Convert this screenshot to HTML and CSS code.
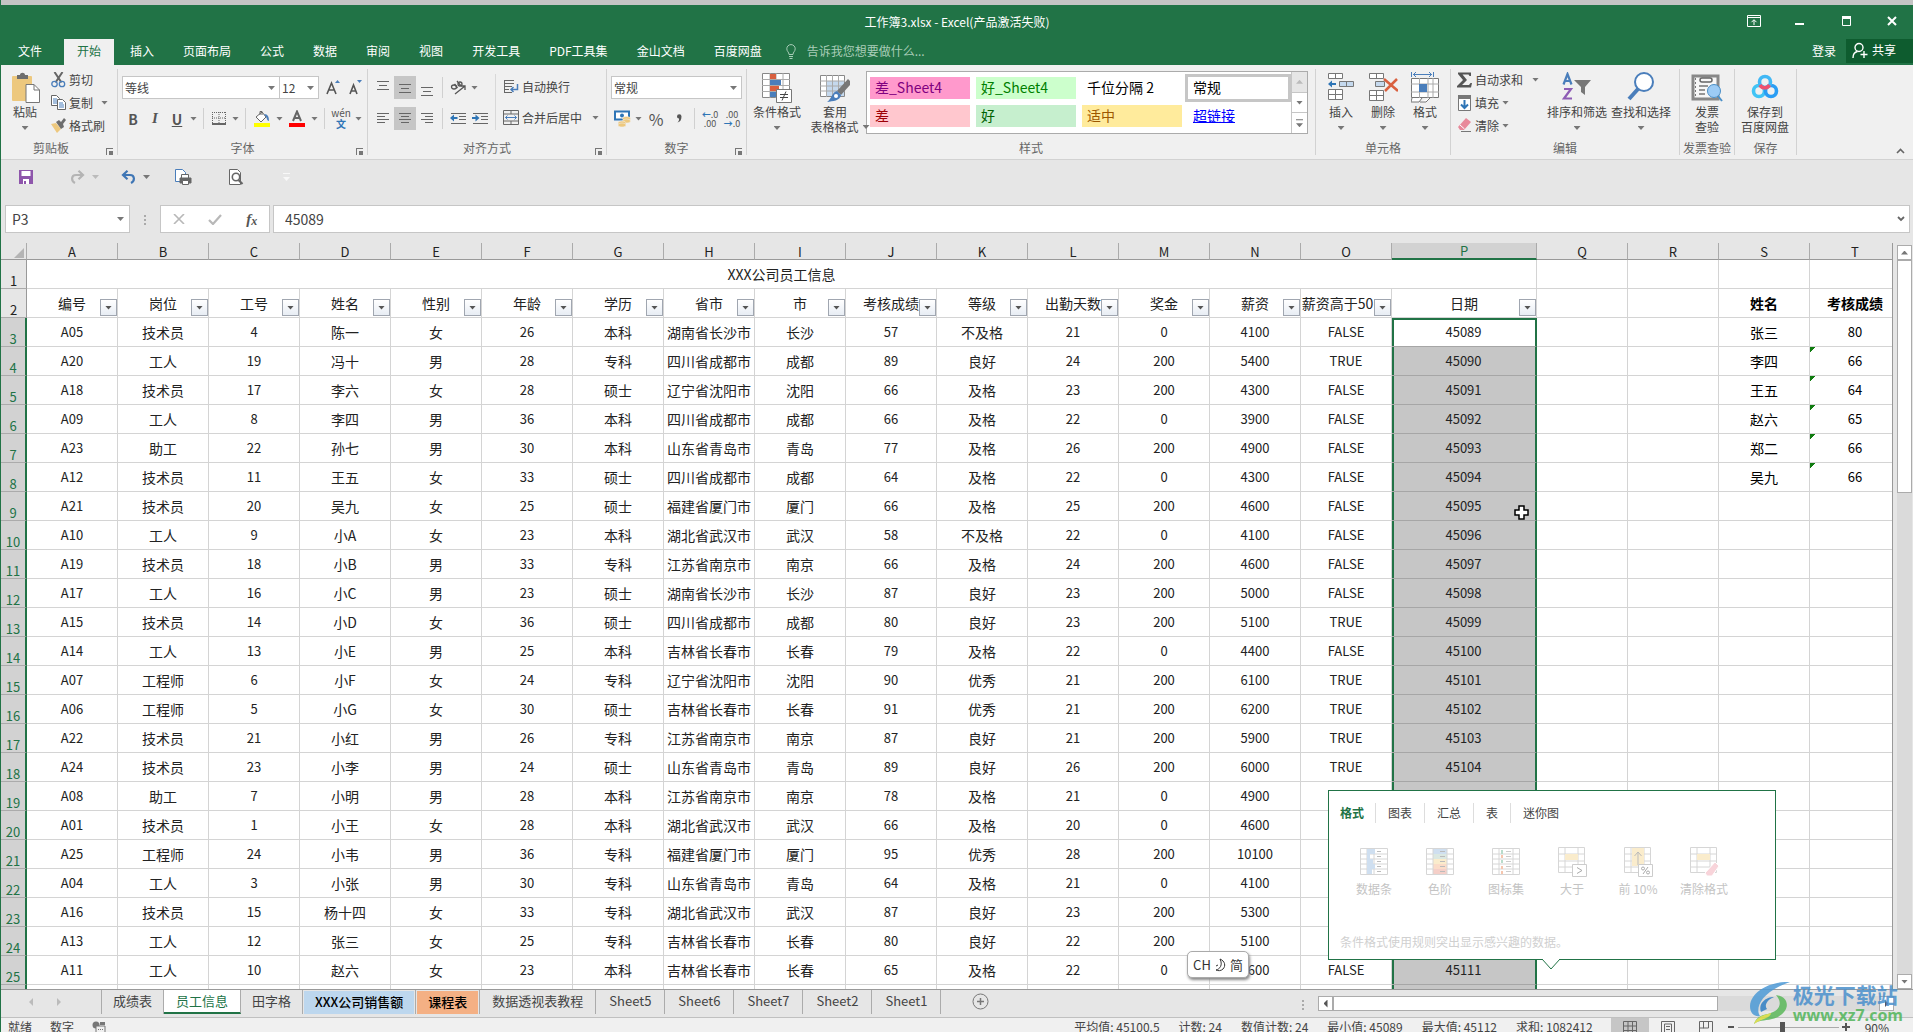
FILE: index.html
```html
<!DOCTYPE html>
<html lang="zh-CN">
<head>
<meta charset="utf-8">
<title>工作簿3.xlsx - Excel</title>
<link rel="stylesheet" href="styles.css">
</head>
<body>
<div class="app">
<header class="titlebar">
  <h1 class="title">工作簿3.xlsx - Excel(产品激活失败)</h1>
  <div class="window-controls">
    <button aria-label="功能区显示选项"><svg width="14" height="12" viewBox="0 0 14 12" fill="none" stroke="#fff"><path d="M.5.5h13v11H.5zM.5 2.5h13M7 10V5M4.500 7.200L7 4.700l2.500 2.500"/></svg></button>
    <button aria-label="最小化"><svg width="14" height="12" viewBox="0 0 14 12"><path d="M2 8h9v2H2z" fill="#fff"/></svg></button>
    <button aria-label="最大化"><svg width="14" height="12" viewBox="0 0 14 12"><path d="M3.500 1.500h8v9h-8z" fill="none" stroke="#fff"/><path d="M3 1h9v3H3z" fill="#fff"/></svg></button>
    <button aria-label="关闭"><svg width="14" height="12" viewBox="0 0 14 12" stroke="#fff" stroke-width="2"><path d="M3 2l8 8M11 2l-8 8"/></svg></button>
  </div>
</header>
<nav class="tabs">
  <button class="tab file">文件</button><button class="tab active">开始</button><button class="tab">插入</button><button class="tab">页面布局</button><button class="tab">公式</button><button class="tab">数据</button><button class="tab">审阅</button><button class="tab">视图</button><button class="tab">开发工具</button><button class="tab">PDF工具集</button><button class="tab">金山文档</button><button class="tab">百度网盘</button>
  <button class="tellme"><svg width="10" height="15" viewBox="0 0 10 15" fill="none" stroke="#a9cdb8"><path d="M3 10.500C3 8 .8 7.500.8 4.800a4.200 4.200 0 018.400 0C9.200 7.500 7 8 7 10.500zM3 12.500h4M3.500 14.500h3"/></svg>告诉我您想要做什么...</button>
  <button class="login">登录</button>
  <button class="share"><svg width="16" height="17" viewBox="0 0 16 17" fill="none" stroke="#fff" stroke-width="1.400"><circle cx="7" cy="5.500" r="4"/><path d="M1 16c0-3.500 2-6 4.500-6.500M12 9v7M8.500 12.500h7"/></svg>共享</button>
</nav>

<section class="ribbon" aria-label="开始">
  <div class="group g-clip">
    <div class="body">
      <button class="big paste"><svg width="30" height="31" viewBox="0 0 30 31"><rect x="0" y="4" width="20" height="25" rx="1" fill="#edc87e"/><path d="M5 7V3h3c0-3 5-3 5 0h3v4z" fill="#6d6d6d"/><path d="M14 12.500h8l5.500 5.500v12.500H14z" fill="#fff" stroke="#777"/><path d="M22 12.500V18h5.500" fill="none" stroke="#777"/></svg><span>粘贴</span><i class="caret"></i></button>
      <div class="stack">
        <button class="small"><svg width="15" height="16" viewBox="0 0 15 16" fill="none"><path d="M3.500 0l7 10.500M11.500 0l-7 10.500" stroke="#666" stroke-width="2"/><circle cx="3.500" cy="12" r="2.700" stroke="#4a7ebb" stroke-width="1.300"/><circle cx="11" cy="12" r="2.700" stroke="#4a7ebb" stroke-width="1.300"/></svg>剪切</button>
        <button class="small"><svg width="15" height="15" viewBox="0 0 15 15" fill="#fff"><path d="M.5.5h5l3 3v7h-8z" stroke="#666"/><path d="M6.500 4.500h5l3 3v7h-8z" stroke="#666"/><path d="M2 4h4M2 6h4M2 8h4M8 8h4M8 10h5M8 12h5" stroke="#4a7ebb"/></svg>复制<i class="caret"></i></button>
        <button class="small"><svg width="15" height="15" viewBox="0 0 15 15"><path d="M0 6l5-1 5 6-4 4z" fill="#edc87e"/><path d="M5 4l3-2 2 2 3-4 2 2-3 4 1 3-3 2z" fill="#6d6d6d"/></svg>格式刷</button>
      </div>
    </div>
    <div class="label">剪贴板<i class="launch"></i></div>
  </div>

  <div class="group g-font">
    <div class="body rows">
      <div class="row">
        <label class="combo font"><select aria-label="字体"><option>等线</option></select></label><label class="combo size"><select aria-label="字号"><option>12</option></select></label>
        <button class="ib" aria-label="增大字号"><svg width="15" height="15" viewBox="0 0 15 15"><path d="M1 14L5.500 3 10 14M2.500 10h6" fill="none" stroke="#555" stroke-width="1.600"/><path d="M9 3l2.500-3L14 3z" fill="#4a7ebb"/></svg></button><button class="ib" aria-label="减小字号"><svg width="15" height="15" viewBox="0 0 15 15"><path d="M2 14l3.500-9L9 14M3 11h5" fill="none" stroke="#555" stroke-width="1.600"/><path d="M9 0l2.500 3L14 0z" fill="#4a7ebb"/></svg></button>
      </div>
      <div class="row">
        <button class="ib bold">B</button><button class="ib ital">I</button><button class="ib under">U</button><button class="k" aria-label="下划线选项"><i class="caret"></i></button><i class="sep"></i>
        <button class="ib" aria-label="边框"><svg width="14" height="13" viewBox="0 0 14 13" fill="none" stroke="#666"><path d="M.5 0v12M7 0v12M13.500 0v12M0 .5h14M0 6h14" stroke-dasharray="1 1"/><path d="M0 12h14" stroke-width="2"/></svg></button><button class="k" aria-label="边框选项"><i class="caret"></i></button><i class="sep"></i>
        <button class="ib wide" aria-label="填充颜色"><svg width="16" height="17" viewBox="0 0 16 17"><path d="M2 7l6-5 4 5-5 5z" fill="#fff" stroke="#666"/><path d="M6 5V1.500h2V5" fill="none" stroke="#666"/><path d="M10 4c4 0 5 3 5 7-2 0-2-3-3-4z" fill="#4a7ebb"/><path d="M0 13h16v4H0z" fill="#ff0"/></svg></button><button class="k" aria-label="填充颜色选项"><i class="caret"></i></button>
        <button class="ib wide" aria-label="字体颜色"><svg width="16" height="17" viewBox="0 0 16 17"><path d="M4 11L8 1.500 12 11M5.500 8h5" fill="none" stroke="#666" stroke-width="2"/><path d="M0 13h16v4H0z" fill="#f00"/></svg></button><button class="k" aria-label="字体颜色选项"><i class="caret"></i></button><i class="sep"></i>
        <button class="ib wide pinyin"><span>wén</span><b>文</b></button><button class="k" aria-label="拼音选项"><i class="caret"></i></button>
      </div>
    </div>
    <div class="label">字体<i class="launch"></i></div>
  </div>

  <div class="group g-align">
    <div class="body">
      <div class="rows">
        <div class="row">
          <button class="ib" aria-label="顶端对齐"><svg width="14" height="16" viewBox="0 0 14 16" stroke="#666"><path d="M1 1.500h12M3 5.500h8M1 9.500h12"/></svg></button><button class="ib on" aria-label="垂直居中"><svg width="14" height="16" viewBox="0 0 14 16" stroke="#666"><path d="M1 4.500h12M3 8.500h8M1 12.500h12"/></svg></button><button class="ib" aria-label="底端对齐"><svg width="14" height="16" viewBox="0 0 14 16" stroke="#666"><path d="M1 7.500h12M3 11.500h8M1 15.500h12"/></svg></button><i class="sep"></i>
          <button class="ib" aria-label="方向"><svg width="17" height="16" viewBox="0 0 17 16" fill="none" stroke="#555" stroke-width="1.300"><ellipse cx="4" cy="7" rx="2.500" ry="2"/><path d="M4.500 4l3 4M7 1l4 5M5 14l10-8M15 10V6h-4"/><ellipse cx="10" cy="4" rx="2" ry="2"/></svg></button><button class="k" aria-label="方向选项"><i class="caret"></i></button>
        </div>
        <div class="row">
          <button class="ib" aria-label="左对齐"><svg width="14" height="14" viewBox="0 0 14 14" stroke="#666"><path d="M1 1.500h12M1 4.500h8M1 7.500h12M1 10.500h8"/></svg></button><button class="ib on" aria-label="居中"><svg width="14" height="14" viewBox="0 0 14 14" stroke="#666"><path d="M1 1.500h12M3 4.500h8M1 7.500h12M3 10.500h8"/></svg></button><button class="ib" aria-label="右对齐"><svg width="14" height="14" viewBox="0 0 14 14" stroke="#666"><path d="M1 1.500h12M5 4.500h8M1 7.500h12M5 10.500h8"/></svg></button><i class="sep"></i>
          <button class="ib" aria-label="减少缩进"><svg width="17" height="14" viewBox="0 0 17 14"><path d="M1 1.500h15M9 4.500h7M9 7.500h7M1 11.500h15" stroke="#666"/><path d="M0 6l4-3.500v2.500h3.500v2H4v2.500z" fill="#2e75b6"/></svg></button><button class="ib" aria-label="增加缩进"><svg width="17" height="14" viewBox="0 0 17 14"><path d="M1 1.500h15M9 4.500h7M9 7.500h7M1 11.500h15" stroke="#666"/><path d="M7.500 6l-4-3.500v2.500H0v2h3.500v2.500z" fill="#2e75b6"/></svg></button>
        </div>
      </div>
      <div class="rows wraps">
        <button class="row small"><svg width="16" height="15" viewBox="0 0 16 15" fill="none" stroke="#666"><path d="M1 1.500h10M1 4.500h10M1 7.500h8M1 10.500h5M1 13.500h8M1.500 1v13"/><path d="M14.500 5v5.500H8M10.500 8L8 10.500l2.500 2.500" stroke="#4a7ebb" stroke-width="1.500"/></svg>自动换行</button>
        <button class="row small"><svg width="16" height="15" viewBox="0 0 16 15" fill="none" stroke="#666"><path d="M.5.500h15v14H.5zM.5 4h15M.5 11h15M8 .5V4M8 11v3.500"/><path d="M2.500 7.500h11M4.500 5.500l-2 2 2 2M11.500 5.500l2 2-2 2" stroke="#4a7ebb"/></svg>合并后居中<i class="caret"></i></button>
      </div>
    </div>
    <div class="label">对齐方式<i class="launch"></i></div>
  </div>

  <div class="group g-num">
    <div class="body rows">
      <div class="row"><label class="combo fmt"><select aria-label="数字格式"><option>常规</option></select></label></div>
      <div class="row">
        <button class="ib" aria-label="会计数字格式"><svg width="17" height="17" viewBox="0 0 17 17"><path d="M1 1.500h14v8H1z" fill="#fff" stroke="#2e75b6" stroke-width="2"/><circle cx="8" cy="5.500" r="2" fill="#2e75b6"/><g fill="#edc87e" stroke="#f0f0f0" stroke-width=".5"><ellipse cx="12.500" cy="8.500" rx="4" ry="2"/><ellipse cx="12.500" cy="11" rx="4" ry="2"/><ellipse cx="8" cy="13" rx="4" ry="2"/><ellipse cx="8" cy="15" rx="4" ry="2"/></g></svg></button><button class="k" aria-label="会计格式选项"><i class="caret"></i></button>
        <button class="ib wide pct">%</button><button class="ib comma" aria-label="千位分隔样式"><svg width="6" height="9" viewBox="0 0 6 9"><path d="M1 2.500a2.200 2.200 0 014.500 0C5.500 6 4 8 1.500 8.500 3 7 3.200 6 3 4.500 1.800 4.500 1 3.700 1 2.500z" fill="#555"/></svg></button><i class="sep"></i>
        <button class="ib dec"><span><em>←</em>.0</span><span>.00</span></button><button class="ib dec"><span>.00</span><span><em>→</em>.0</span></button>
      </div>
    </div>
    <div class="label">数字<i class="launch"></i></div>
  </div>

  <div class="group g-style">
    <div class="body">
      <button class="big w60"><svg width="30" height="31" viewBox="0 0 30 31"><path d="M.5 1.500h27v24H.5z" fill="#fff" stroke="#888"/><path d="M0 7.500h28M0 13.500h28M0 19.500h28M8 1v25M14 1v25M21 1v25" stroke="#aaa"/><path d="M8 2h6v5H8zM8 14h9v5H8z" fill="#d9603f"/><path d="M8 8h11v5H8zM8 20h6v5H8z" fill="#4a7ebb"/><path d="M14.500 17.500h15v13h-15z" fill="#fff" stroke="#777"/><path d="M18 22.500h8M18 25.500h8M24 19.500l-4 9" stroke="#444"/></svg><span>条件格式</span><i class="caret"></i></button>
      <button class="big w56"><svg width="30" height="31" viewBox="0 0 30 31"><path d="M.5 3.500h24v21H.5z" fill="#fff" stroke="#888"/><path d="M7 9h17v15H7z" fill="#c5d9ee"/><path d="M0 9h25M0 14h25M0 19h25M6.500 3v22M12.500 3v22M18.500 3v22" stroke="#aaa"/><path d="M28 7l2 2v4l-9 10-4-4z" fill="#777"/><path d="M17 19l4 4c-1 6-8 6-14 7 4-2 5-10 10-11z" fill="#4a7ebb"/><circle cx="16" cy="24" r="2" fill="#fff"/></svg><span>套用</span><span class="sub">表格格式<i class="caret"></i></span></button>
      <div class="gallery">
        <div class="styles">
          <button class="st s1">差_Sheet4</button><button class="st s2">好_Sheet4</button><button class="st">千位分隔 2</button><button class="st sel">常规</button>
          <button class="st s3">差</button><button class="st s4">好</button><button class="st s5">适中</button><button class="st s6">超链接</button>
        </div>
        <div class="gscroll"><button class="dis" aria-label="上一行"><i class="caret up"></i></button><button aria-label="下一行"><i class="caret"></i></button><button aria-label="其他样式"><i class="caret more"></i></button></div>
      </div>
    </div>
    <div class="label">样式</div>
  </div>

  <div class="group g-cell">
    <div class="body">
      <button class="big"><svg width="28" height="31" viewBox="0 0 28 31" fill="#fff" stroke="#777"><path d="M1.500 1.500h14v5h-14zM8.500 1.500v5M1.500 17.500h14v10h-14zM8.500 17.500v10M1.500 22.500h14"/><path d="M12.500 9.500h14v5h-14zM19.500 9.500v5" fill="#c5d9ee"/><path d="M1 12l4-3.500V11h4v2H5v2.500z" fill="#2e75b6" stroke="none"/></svg><span>插入</span><i class="caret"></i></button>
      <button class="big"><svg width="30" height="31" viewBox="0 0 30 31" fill="#fff" stroke="#777"><path d="M1.500 1.500h14v5h-14zM8.500 1.500v5M1.500 18.500h14v10h-14zM8.500 18.500v10M1.500 23.500h14"/><path d="M7.500 9.500h9v5h-9z" fill="#c5d9ee"/><path d="M16 7l14 12M29 7L17 19" stroke="#d9603f" stroke-width="2.500"/></svg><span>删除</span><i class="caret"></i></button>
      <button class="big"><svg width="28" height="31" viewBox="0 0 28 31" fill="#fff" stroke="#777"><path d="M.5 6.500h27v19H.5z"/><path d="M0 12h28M0 20h28M8.500 6v20M17 6v20M22 6v20" stroke="#aaa"/><path d="M8 12h8v8H8z" fill="#4a7ebb" stroke="none"/><path d="M1 26l-1 4h8l3-4M9 30h6l4-4" /><path d="M.5 0v5M22.500 0v5M2 2.500h19M5 0L2.500 2.500 5 5M18 0l2.500 2.500L18 5" stroke="#4a7ebb" fill="none"/></svg><span>格式</span><i class="caret"></i></button>
    </div>
    <div class="label">单元格</div>
  </div>

  <div class="group g-edit">
    <div class="body">
      <div class="stack">
        <button class="small"><svg width="15" height="16" viewBox="0 0 15 16"><path d="M1 .5h13V4h-1.500l-1-1.500h-6L10 8l-5 5h7l1.500-2H15l-1 4.500H0V14l6-6L1 2z" fill="#555"/></svg>自动求和<i class="caret far"></i></button>
        <button class="small"><svg width="15" height="16" viewBox="0 0 15 16"><path d="M1.500 1v14.500h12V1" fill="#fff" stroke="#777"/><path d="M1 0h13v4H1z" fill="#777"/><path d="M7.500 5v8M4 9.500L7.500 13 11 9.500" fill="none" stroke="#2e75b6" stroke-width="2"/></svg>填充<i class="caret"></i></button>
        <button class="small"><svg width="15" height="15" viewBox="0 0 15 15"><path d="M9 0l5 4-7 8H3L1 9z" fill="#e8899a"/><path d="M3 7l4.500 4" stroke="#fff"/><path d="M4 13.500h10" stroke="#777"/></svg>清除<i class="caret"></i></button>
      </div>
      <button class="big w64"><svg width="30" height="31" viewBox="0 0 30 31" fill="none"><path d="M1.500 12.500L5.500 2l4 10.500M3 9h5.500" stroke="#4a7ebb" stroke-width="2.200"/><path d="M2 17h7l-7 9.500h8" stroke="#8e5cb5" stroke-width="2.200"/><path d="M12 8h17l-6 7v8l-4-3v-5z" fill="#777"/></svg><span>排序和筛选</span><i class="caret"></i></button>
      <button class="big w64"><svg width="30" height="31" viewBox="0 0 30 31"><path d="M12 17L3 27" stroke="#4a7ebb" stroke-width="4"/><circle cx="18" cy="10" r="9" fill="#fff" stroke="#4a7ebb" stroke-width="2"/></svg><span>查找和选择</span><i class="caret"></i></button>
    </div>
    <div class="label">编辑</div>
  </div>

  <div class="group g-inv">
    <div class="body"><button class="big w54"><svg width="32" height="31" viewBox="0 0 32 31"><path d="M2 4h25v23H2z" fill="#f7f7f7" stroke="#888" stroke-width="3"/><rect x="9" y="6" width="12" height="4" rx="2" fill="none" stroke="#666" stroke-width="1.500"/><path d="M8 14h9M8 18h6M8 22h6" stroke="#777" stroke-width="1.500"/><path d="M4.500 6v20" stroke="#777" stroke-dasharray="2 2"/><circle cx="23" cy="19" r="6.500" fill="#9ccbf5" stroke="#4a8fc7"/><path d="M27 24l4 5" stroke="#4a8fc7" stroke-width="2"/></svg><span>发票</span><span class="sub">查验</span></button></div>
    <div class="label">发票查验</div>
  </div>
  <div class="group g-save">
    <div class="body"><button class="big w60"><svg width="28" height="31" viewBox="0 0 28 31" fill="none" stroke-width="3.600"><circle cx="8" cy="19" r="5.500" stroke="#41c4f5"/><circle cx="20" cy="19" r="5.500" stroke="#2a9df4"/><circle cx="14" cy="10" r="5.500" stroke="#41b8f5"/><path d="M9 13a5.500 5.500 0 009.500 0" stroke="#f0506e"/></svg><span>保存到</span><span class="sub">百度网盘</span></button></div>
    <div class="label">保存</div>
  </div>
  <button class="collapse" aria-label="折叠功能区"><svg width="9" height="6" viewBox="0 0 9 6" fill="none" stroke="#666" stroke-width="1.600"><path d="M1 5l3.500-3.500L8 5"/></svg></button>
</section>

<div class="qat">
  <button aria-label="保存"><svg width="14" height="14" viewBox="0 0 14 14"><path d="M0 0h14v14H0z" fill="#8e56ab"/><path d="M2.500 1h9v5h-9zM4 9h6v5H4z" fill="#fff"/><path d="M5 11h2v3H5z" fill="#8e56ab"/></svg></button>
  <button aria-label="恢复"><svg width="15" height="14" viewBox="0 0 15 14" fill="none" stroke="#b4b4b4" stroke-width="2.200"><path d="M13 5H6C1 5 1 11 5 13M8.500.8L13 5 8.500 9.200"/></svg><i class="caret dim"></i></button>
  <button aria-label="撤消"><svg width="15" height="14" viewBox="0 0 15 14" fill="none" stroke="#3f76b5" stroke-width="2.200"><path d="M2 5h7c5 0 5 6 1 8M6.500.8L2 5l4.500 4.200"/></svg><i class="caret"></i></button>
  <button aria-label="快速打印"><svg width="17" height="16" viewBox="0 0 17 16" fill="#fff" stroke="#666"><path d="M.5.5h7l3 3v9H.5z" stroke="#4a7ebb"/><path d="M6.500 5.500h7v4h-7z"/><path d="M5 9h11v5H5z" fill="#666"/><path d="M7.500 11.500h6v4h-6z"/></svg></button>
  <button aria-label="打印预览"><svg width="15" height="16" viewBox="0 0 15 16" fill="#fff" stroke="#666"><path d="M.5.5h8l3 3v12H.5z"/><circle cx="7" cy="8" r="3.700" stroke-width="1.600"/><path d="M9.500 11l4 4" stroke-width="2.200"/></svg></button>
  <button aria-label="自定义快速访问工具栏"><i class="caret more faint"></i></button>
</div>

<div class="fbar">
  <label class="namebox"><input aria-label="名称框" value="P3"><i class="caret"></i></label>
  <i class="grip"></i>
  <div class="fbtns">
    <button aria-label="取消"><svg width="12" height="10" viewBox="0 0 12 10" stroke="#b8b8b8" stroke-width="1.600"><path d="M1 0l10 10M11 0L1 10"/></svg></button>
    <button aria-label="输入"><svg width="14" height="11" viewBox="0 0 14 11" fill="none" stroke="#b8b8b8" stroke-width="2.200"><path d="M1 6l4 4 8-9"/></svg></button>
    <button class="fx" aria-label="插入函数"><i>f</i><i class="x">x</i></button>
  </div>
  <label class="finput"><input aria-label="编辑栏" value="45089"><svg width="8" height="6" viewBox="0 0 8 6" fill="none" stroke="#666" stroke-width="1.800"><path d="M1 1l3 3 3-3"/></svg></label>
</div>

<main class="sheet">
<div class="viewport">
<table class="grid">
<colgroup><col class="c-head"><col span="15" class="c-std"><col class="c-p"><col span="4" class="c-std"></colgroup>
<thead><tr><th class="corner"><svg width="10" height="10" viewBox="0 0 10 10"><path d="M10 0v10H0z" fill="#b4b4b4"/></svg></th><th>A<th>B<th>C<th>D<th>E<th>F<th>G<th>H<th>I<th>J<th>K<th>L<th>M<th>N<th>O<th class="psel">P<th>Q<th>R<th>S<th>T</tr></thead>
<tbody>
<tr class="merged"><th scope="row">1<td colspan="16">XXX公司员工信息<td><td><td><td></tr>
<tr class="filters"><th scope="row">2<td>编号<button aria-label="筛选"></button><td>岗位<button aria-label="筛选"></button><td>工号<button aria-label="筛选"></button><td>姓名<button aria-label="筛选"></button><td>性别<button aria-label="筛选"></button><td>年龄<button aria-label="筛选"></button><td>学历<button aria-label="筛选"></button><td>省市<button aria-label="筛选"></button><td>市<button aria-label="筛选"></button><td>考核成绩<button aria-label="筛选"></button><td>等级<button aria-label="筛选"></button><td>出勤天数<button aria-label="筛选"></button><td>奖金<button aria-label="筛选"></button><td>薪资<button aria-label="筛选"></button><td class="tight">薪资高于50<button aria-label="筛选"></button><td>日期<button aria-label="筛选"></button><td><td><td class="strong">姓名<td class="strong">考核成绩</tr>
</tbody>
<tbody class="picked">
<tr class="first"><th scope="row">3<td>A05<td>技术员<td>4<td>陈一<td>女<td>26<td>本科<td>湖南省长沙市<td>长沙<td>57<td>不及格<td>21<td>0<td>4100<td>FALSE<td>45089<td><td><td>张三<td>80</tr>
<tr><th scope="row">4<td>A20<td>工人<td>19<td>冯十<td>男<td>28<td>专科<td>四川省成都市<td>成都<td>89<td>良好<td>24<td>200<td>5400<td>TRUE<td>45090<td><td><td>李四<td class="flag">66</tr>
<tr><th scope="row">5<td>A18<td>技术员<td>17<td>李六<td>女<td>28<td>硕士<td>辽宁省沈阳市<td>沈阳<td>66<td>及格<td>23<td>200<td>4300<td>FALSE<td>45091<td><td><td>王五<td class="flag">64</tr>
<tr><th scope="row">6<td>A09<td>工人<td>8<td>李四<td>男<td>36<td>本科<td>四川省成都市<td>成都<td>66<td>及格<td>22<td>0<td>3900<td>FALSE<td>45092<td><td><td>赵六<td class="flag">65</tr>
<tr><th scope="row">7<td>A23<td>助工<td>22<td>孙七<td>男<td>30<td>本科<td>山东省青岛市<td>青岛<td>77<td>及格<td>26<td>200<td>4900<td>FALSE<td>45093<td><td><td>郑二<td class="flag">66</tr>
<tr><th scope="row">8<td>A12<td>技术员<td>11<td>王五<td>女<td>33<td>硕士<td>四川省成都市<td>成都<td>64<td>及格<td>22<td>0<td>4300<td>FALSE<td>45094<td><td><td>吴九<td class="flag">66</tr>
<tr><th scope="row">9<td>A21<td>技术员<td>20<td>吴九<td>女<td>25<td>硕士<td>福建省厦门市<td>厦门<td>66<td>及格<td>25<td>200<td>4600<td>FALSE<td>45095<td><td><td><td></tr>
<tr><th scope="row">10<td>A10<td>工人<td>9<td>小A<td>女<td>23<td>本科<td>湖北省武汉市<td>武汉<td>58<td>不及格<td>22<td>0<td>4100<td>FALSE<td>45096<td><td><td><td></tr>
<tr><th scope="row">11<td>A19<td>技术员<td>18<td>小B<td>男<td>33<td>专科<td>江苏省南京市<td>南京<td>66<td>及格<td>24<td>200<td>4600<td>FALSE<td>45097<td><td><td><td></tr>
<tr><th scope="row">12<td>A17<td>工人<td>16<td>小C<td>男<td>23<td>硕士<td>湖南省长沙市<td>长沙<td>87<td>良好<td>23<td>200<td>5000<td>FALSE<td>45098<td><td><td><td></tr>
<tr><th scope="row">13<td>A15<td>技术员<td>14<td>小D<td>女<td>36<td>硕士<td>四川省成都市<td>成都<td>80<td>良好<td>23<td>200<td>5100<td>TRUE<td>45099<td><td><td><td></tr>
<tr><th scope="row">14<td>A14<td>工人<td>13<td>小E<td>男<td>25<td>本科<td>吉林省长春市<td>长春<td>79<td>及格<td>22<td>0<td>4400<td>FALSE<td>45100<td><td><td><td></tr>
<tr><th scope="row">15<td>A07<td>工程师<td>6<td>小F<td>女<td>24<td>专科<td>辽宁省沈阳市<td>沈阳<td>90<td>优秀<td>21<td>200<td>6100<td>TRUE<td>45101<td><td><td><td></tr>
<tr><th scope="row">16<td>A06<td>工程师<td>5<td>小G<td>女<td>30<td>硕士<td>吉林省长春市<td>长春<td>91<td>优秀<td>21<td>200<td>6200<td>TRUE<td>45102<td><td><td><td></tr>
<tr><th scope="row">17<td>A22<td>技术员<td>21<td>小红<td>男<td>26<td>专科<td>江苏省南京市<td>南京<td>87<td>良好<td>21<td>200<td>5900<td>TRUE<td>45103<td><td><td><td></tr>
<tr><th scope="row">18<td>A24<td>技术员<td>23<td>小李<td>男<td>24<td>硕士<td>山东省青岛市<td>青岛<td>89<td>良好<td>26<td>200<td>6000<td>TRUE<td>45104<td><td><td><td></tr>
<tr><th scope="row">19<td>A08<td>助工<td>7<td>小明<td>男<td>28<td>本科<td>江苏省南京市<td>南京<td>78<td>及格<td>21<td>0<td>4900<td><td><td><td><td><td></tr>
<tr><th scope="row">20<td>A01<td>技术员<td>1<td>小王<td>女<td>28<td>本科<td>湖北省武汉市<td>武汉<td>66<td>及格<td>20<td>0<td>4600<td><td><td><td><td><td></tr>
<tr><th scope="row">21<td>A25<td>工程师<td>24<td>小韦<td>男<td>36<td>专科<td>福建省厦门市<td>厦门<td>95<td>优秀<td>28<td>200<td>10100<td><td><td><td><td><td></tr>
<tr><th scope="row">22<td>A04<td>工人<td>3<td>小张<td>男<td>30<td>专科<td>山东省青岛市<td>青岛<td>64<td>及格<td>21<td>0<td>4100<td><td><td><td><td><td></tr>
<tr><th scope="row">23<td>A16<td>技术员<td>15<td>杨十四<td>女<td>33<td>专科<td>湖北省武汉市<td>武汉<td>87<td>良好<td>23<td>200<td>5300<td><td><td><td><td><td></tr>
<tr><th scope="row">24<td>A13<td>工人<td>12<td>张三<td>女<td>25<td>专科<td>吉林省长春市<td>长春<td>80<td>良好<td>22<td>200<td>5100<td><td><td><td><td><td></tr>
<tr><th scope="row">25<td>A11<td>工人<td>10<td>赵六<td>女<td>23<td>本科<td>吉林省长春市<td>长春<td>65<td>及格<td>22<td>0<td>4600<td>FALSE<td>45111<td><td><td><td></tr>
<tr><th scope="row"><td><td><td><td><td><td><td><td><td><td><td><td><td><td><td><td><td><td><td><td></tr>
</tbody>
</table>

<svg class="cursor" width="17" height="17" viewBox="0 0 17 17"><path d="M6 2h5v4h4v5h-4v4H6v-4H2V6h4z" fill="#fff" stroke="#000" stroke-width="1.500"/></svg>

<aside class="quick">
  <div class="qtabs"><button class="act">格式</button><button>图表</button><button>汇总</button><button>表</button><button>迷你图</button></div>
  <div class="qitems">
    <button><svg width="28" height="28" viewBox="0 0 28 28" fill="none" stroke="#d6d6d6"><path d="M.5.5h27v26H.5zM0 6h28M0 11h28M0 16h28M0 21h28M7 0v27M14 0v27"/><path d="M7 1h8v5H7zM7 6h3v5H7zM7 11h6v5H7zM7 16h8v5H7zM7 21h5v5H7z" fill="#cfdff0" stroke="none"/><path d="M17 3.500h4M17 8.500h4M17 13.500h4M17 18.500h4M17 23.500h4" stroke="#bbb"/></svg>数据条</button>
    <button><svg width="28" height="28" viewBox="0 0 28 28" fill="none" stroke="#d6d6d6"><path d="M.5.5h27v26H.5zM0 6h28M0 11h28M0 16h28M0 21h28"/><g stroke="none"><path d="M7 1h14v5H7z" fill="#cfdff0"/><path d="M7 6h14v5H7z" fill="#dbe8e2"/><path d="M7 11h14v5H7z" fill="#faeccc"/><path d="M7 16h14v5H7z" fill="#fbdcc8"/><path d="M7 21h14v5H7z" fill="#f5cfc8"/></g><path d="M7 0v27M21 0v27"/><path d="M14 3.500h5M14 8.500h5M14 13.500h5M14 18.500h5M14 23.500h5" stroke="#bbb"/></svg>色阶</button>
    <button><svg width="28" height="28" viewBox="0 0 28 28" fill="none" stroke="#d6d6d6"><path d="M.5.5h27v26H.5zM0 6h28M0 11h28M0 16h28M0 21h28M7 0v27M21 0v27"/><path d="M10 2v4M10 12v3" stroke="#b8dccb" stroke-width="2"/><path d="M10 7v3M10 18v3M10 23v3" stroke="#f6c6ae" stroke-width="2"/><path d="M14 3.500h5M14 8.500h5M14 13.500h5M14 18.500h5M14 23.500h5" stroke="#ccc"/></svg>图标集</button>
    <button><svg width="32" height="30" viewBox="0 0 32 30" fill="none" stroke="#d6d6d6"><path d="M2.500.5h26v25h-26zM2 7h27M2 14h27M2 20h27M9 0v26M22 0v26"/><path d="M9 7h13v6H9z" fill="#faeccc" stroke="none"/><path d="M16.500 17.500h14v12h-14z" fill="#fff" stroke="#ccc"/><path d="M21 20.500l5 3-5 3" stroke="#aaa"/></svg>大于</button>
    <button><svg width="32" height="30" viewBox="0 0 32 30" fill="none" stroke="#d6d6d6"><path d="M2.500.5h26v25h-26zM2 7h27M2 14h27M2 20h27M9 0v26M22 0v26"/><path d="M10 1h12v18H10z" fill="#faeccc" stroke="none"/><path d="M16 18V5M12.500 9L16 5l3.500 4" stroke="#bbb"/><path d="M16.500 17.500h14v12h-14z" fill="#fff" stroke="#ccc"/><circle cx="21" cy="21.500" r="1.500" stroke="#aaa"/><circle cx="26" cy="25.500" r="1.500" stroke="#aaa"/><path d="M26 20l-5 7" stroke="#aaa"/></svg>前 10%</button>
    <button><svg width="32" height="30" viewBox="0 0 32 30" fill="none" stroke="#d6d6d6"><path d="M2.500.5h26v25h-26zM2 7h27M2 14h27M2 20h27M9 0v26M22 0v26"/><path d="M9 7h13v6H9z" fill="#faeccc" stroke="none"/><path d="M27 15l4 4-7 10h-5l-2-3z" fill="#f8d4da" stroke="#fff"/></svg>清除格式</button>
  </div>
  <p>条件格式使用规则突出显示感兴趣的数据。</p>
  <svg class="tail" width="20" height="11" viewBox="0 0 20 11"><path d="M1 0l9 10 9-10" fill="#fff" stroke="#217346"/></svg>
</aside>
<div class="ime">CH <svg width="11" height="14" viewBox="0 0 11 14" fill="none" stroke="#333"><path d="M5 1c5 2 6 7 3 10-2 2-5 2-7 1 4-1 7-5 4-11zM1 8l2-1"/></svg> 简</div>
</div>
<div class="vscroll"><button aria-label="向上滚动"><i class="caret up"></i></button><i class="thumb"></i><i class="rest"></i><button aria-label="向下滚动"><i class="caret"></i></button></div>
</main>

<div class="sheetbar">
  <div class="snav"><i class="tri l"></i><i class="tri r"></i></div>
  <button>成绩表</button><button class="cur">员工信息</button><button>田字格</button><button class="blue"><span>XXX公司销售额</span></button><button class="orange"><span>课程表</span></button><button class="mid">数据透视表教程</button><button class="loose">Sheet5</button><button class="loose">Sheet6</button><button class="loose">Sheet7</button><button class="loose">Sheet2</button><button class="loose">Sheet1</button>
  <button class="add" aria-label="新工作表"><svg width="17" height="17" viewBox="0 0 17 17" fill="none" stroke="#777"><circle cx="8.500" cy="8.500" r="7.500"/><path d="M8.500 5v7M5 8.500h7" stroke-width="1.500"/></svg></button>
  <i class="grip"></i>
  <div class="hscroll"><button aria-label="向左滚动"><i class="tri l dark"></i></button><i class="thumb"></i><i class="rest"></i><button aria-label="向右滚动"><i class="tri r dark"></i></button></div>
</div>
<footer class="status">
  <span>就绪</span><span>数字</span><svg width="14" height="14" viewBox="0 0 14 14"><circle cx="4" cy="4" r="3.500" fill="#777"/><path d="M4 5h9v8H4z" fill="#f0f0f0" stroke="#777"/><path d="M8 1h5v3H8z" fill="#777"/><path d="M6 8.500h6M6 11.500h6" stroke="#777" stroke-dasharray="1 1"/></svg>
  <div class="stats"><span>平均值: 45100.5</span><span>计数: 24</span><span>数值计数: 24</span><span>最小值: 45089</span><span>最大值: 45112</span><span>求和: 1082412</span></div>
  <div class="views"><button class="on" aria-label="普通"><svg width="14" height="14" viewBox="0 0 14 14" fill="none" stroke="#666"><path d="M.5.5h13v13H.5zM.5 5h13M.5 9.500h13M5 .5v13M9.500.5v13"/></svg></button><button aria-label="页面布局"><svg width="14" height="14" viewBox="0 0 14 14" fill="none" stroke="#666"><path d="M.5.5h13v13H.5zM3.500 3h7v11M3.500 3v11M5 5.500h4M5 8.500h4M5 11.500h4"/></svg></button><button aria-label="分页预览"><svg width="14" height="14" viewBox="0 0 14 14" fill="none" stroke="#666"><path d="M.5 14V.5h13V14M4.500.5V7h5V.5M0 7h5"/></svg></button></div>
  <div class="zoom"><button aria-label="缩小"><svg width="8" height="8" viewBox="0 0 8 8"><path d="M1 3h6v2H1z" fill="#555"/></svg></button><input type="range" aria-label="缩放" min="0" max="100" value="44"><button aria-label="放大"><svg width="8" height="8" viewBox="0 0 8 8"><path d="M0 3h3V0h2v3h3v2H5v3H3V5H0z" fill="#555"/></svg></button><span>90%</span></div>
</footer>
<div class="brand">
  <svg width="44" height="42" viewBox="0 0 44 42"><path d="M41 0C22-1 2 9 1 24c0 8 5 11 10 10C6 27 11 10 41 0z" fill="#4d9ad6"/><path d="M12 30c-3-9 5-15 13-15-7 3-10 8-7 12-2 1-4 2-6 3z" fill="#2f7fc4"/><path d="M27 13c16 2 14 20-4 24-8 2-14 1-18 5 2-7 8-9 14-10 12-3 15-11 8-19z" fill="#5bb85a"/><path d="M5 42c2-7 10-9 17-11 0 5-10 6-17 11z" fill="#d9dc3c"/></svg>
  <div><b>极光下载站</b><strong>www.xz7.com</strong></div>
</div>
</div>
</body>
</html>
```
FILE: styles.css
```css
* { box-sizing: border-box; }
body { margin: 0; overflow: hidden; background: #e6e6e6; font: 12px/16px "Noto Sans CJK SC", "Noto Sans", sans-serif; color: #444; }
button, input, select { font: inherit; color: inherit; border: 0; background: none; padding: 0; margin: 0; border-radius: 0; }
button { display: flex; align-items: center; justify-content: center; white-space: nowrap; }
svg { flex: none; display: block; }
i, em { font-style: normal; }
.app { position: relative; height: 100vh; display: flex; flex-direction: column; border-left: 1px solid #217346; }
.app > * { flex: none; }

.caret { flex: none; width: 7px; height: 4px; background: #777; clip-path: polygon(0 0, 100% 0, 50% 100%); }
.caret.up { clip-path: polygon(50% 0, 100% 100%, 0 100%); }
.caret.more { height: 8px; clip-path: polygon(0 0, 100% 0, 100% 1px, 0 1px, 0 4px, 100% 4px, 50% 100%, 0 4px); }
.caret.dim { background: #bbb; }
.caret.faint { background: #f8f8f8; }

/* title bar and ribbon tabs */
.titlebar { position: relative; height: 39px; background: #217346; border-top: 5px solid #c4c4c4; display: flex; align-items: center; justify-content: center; color: #fff; }
.title { margin: 0; font-size: 12px; font-weight: 400; }
.window-controls { position: absolute; right: 0; top: 0; display: flex; }
.window-controls button { width: 46px; height: 32px; padding-left: 3px; }
.tabs { height: 26px; background: #217346; color: #fff; display: flex; }
.tabs button { padding: 0 14px 2px 15px; }
.tabs .file { padding-right: 22px; padding-left: 17px; }
.tabs .active { background: #f0f0f0; color: #217346; padding-right: 13px; padding-left: 13px; margin-right: 1px; }
.tabs .tellme { color: #a9cdb8; gap: 11px; padding-left: 10px; }
.tabs .login { margin-left: auto; padding-right: 10px; padding-left: 10px; }
.tabs .share { background: #0e5c2f; width: 67px; height: 24px; gap: 4px; justify-content: flex-start; padding-left: 6px; }

/* ribbon */
.ribbon { position: relative; display: flex; padding: 4px 0; background: #f0f0f0; border-bottom: 1px solid #d2d2d2; }
.group { border-right: 1px solid #d2d2d2; display: flex; flex-direction: column; flex: none; }
.body { height: 71px; display: flex; }
.label { position: relative; height: 15px; text-align: center; color: #666; }
.launch { position: absolute; right: 4px; bottom: 0; width: 7px; height: 7px; border-left: 1px solid #777; border-top: 1px solid #777; background: linear-gradient(#777, #777) right bottom / 4px 4px no-repeat; }
.g-clip { width: 117px; }
.g-font { width: 250px; }
.g-align { width: 239px; }
.g-num { width: 140px; }
.g-style { width: 569px; }
.g-cell { width: 135px; }
.g-edit { width: 229px; }
.g-inv { width: 55px; }
.g-save { width: 62px; }
.g-clip .body { padding-left: 8px; }
.g-clip .label { padding-right: 16px; }
.g-font .body, .g-align .body, .g-num .body { padding-left: 4px; }
.g-cell .body { padding-left: 4px; }
.g-edit .body { padding-left: 6px; }
.big { flex-direction: column; justify-content: flex-start; padding-top: 3px; width: 42px; }
.big > svg { margin-bottom: 1px; }
.big > .caret { margin-top: 6px; }
.big.w54 { width: 54px; }
.big.w56 { width: 56px; }
.big.w60 { width: 60px; }
.big.w64 { width: 64px; }
.big .sub { display: flex; align-items: center; gap: 4px; line-height: 14px; }
.g-style .sub { margin-left: 10px; }
.paste { width: 36px; }
.paste span { margin-right: 4px; }
.paste > .caret { margin-right: 4px; }
.stack { display: flex; flex-direction: column; padding-left: 6px; }
.small { justify-content: flex-start; height: 23px; gap: 3px; padding-bottom: 2px; }
.small .caret { margin-left: 5px; }
.small .caret.far { margin-left: 8px; }
.g-edit .small .caret { margin-left: 0; }
.g-edit .small .caret.far { margin-left: 6px; }
.g-edit .stack { padding-left: 0; width: 88px; }
.rows { display: flex; flex-direction: column; gap: 8px; padding-top: 7px; }
.row { display: flex; align-items: center; height: 23px; }
.ib { width: 22px; height: 23px; flex: none; font-size: 14px; color: #555; }
.ib.wide { width: 24px; }
.ib.on { background: #c6c6c6; }
.bold { font-weight: 700; }
.ital { font: italic 700 15px "Liberation Serif", serif; }
.under { font-weight: 700; text-decoration: underline; }
.k { width: 11px; height: 23px; flex: none; }
.sep { width: 9px; height: 21px; flex: none; background: linear-gradient(#d0d0d0, #d0d0d0) center / 1px 100% no-repeat; }
.combo { position: relative; display: flex; height: 23px; background: #fff; border: 1px solid #c6c6c6; flex: none; }
.combo select { appearance: none; width: 100%; padding-left: 2px; }
.combo::after { content: ""; position: absolute; right: 4px; top: 9px; width: 7px; height: 4px; background: #777; clip-path: polygon(0 0, 100% 0, 50% 100%); pointer-events: none; }
.combo.font { width: 158px; }
.combo.size { width: 40px; margin-left: -1px; margin-right: 3px; }
.combo.fmt { width: 131px; }
.pinyin { flex-direction: column; font-size: 10px; line-height: 11px; }
.pinyin b { color: #2e75b6; font-size: 10px; line-height: 12px; }
.pct { font-size: 16px; }
.dec { flex-direction: column; font-size: 9px; line-height: 9px; }
.dec em { color: #2e75b6; font-weight: 700; }
.wraps { border-left: 1px solid #d8d8d8; margin: 5px 0 0 4px; padding: 2px 0 0 7px; height: 56px; }
.wraps .caret { margin-left: 7px; }
.gallery { display: flex; height: 63px; margin: 2px 0 0 3px; background: #fff; border: 1px solid #ababab; }
.styles { display: grid; grid-template-columns: repeat(4, 100px); grid-auto-rows: 22px; gap: 6px; padding: 5px 3px; align-items: center; }
.st { height: 22px; justify-content: flex-start; padding: 0 0 2px 5px; font-size: 14px; color: #000; }
.s1 { background: #ff99cc; color: #800080; }
.s2 { background: #ccffcc; color: #008000; }
.s3 { background: #ffc7ce; color: #9c0006; }
.s4 { background: #c6efce; color: #006100; }
.s5 { background: #ffeb9c; color: #9c5700; }
.s6 { color: #00f; text-decoration: underline; }
.st.sel { margin: 0 -3px; height: 28px; border: 3px solid #c6c6c6; }
.gscroll { display: flex; flex-direction: column; border-left: 1px solid #c6c6c6; }
.gscroll button { width: 15px; flex: 1; border-bottom: 1px solid #c6c6c6; }
.gscroll button:last-child { border: 0; }
.gscroll .dis { background: #e6e6e6; }
.gscroll .dis .caret { background: #bbb; }
.collapse { position: absolute; right: 8px; bottom: 5px; }

/* quick access toolbar */
.qat { display: flex; align-items: center; height: 34px; margin-bottom: 11px; padding-left: 18px; }
.qat button { gap: 7px; justify-content: flex-start; width: 51px; }
.qat button:nth-child(3), .qat button:nth-child(4), .qat button:nth-child(5) { width: 54px; }

/* formula bar */
.fbar { display: flex; height: 28px; padding: 0 3px 0 4px; font-size: 14px; }
.namebox, .fbtns, .finput { display: flex; align-items: center; background: #fff; border: 1px solid #c6c6c6; }
.namebox { width: 125px; padding: 0 5px 0 6px; }
.namebox input { flex: 1; min-width: 0; }
.grip { width: 30px; background: linear-gradient(#aaa 2px, transparent 2px) center 10px / 2px 5px no-repeat, linear-gradient(#aaa 2px, transparent 2px) center 14px / 2px 5px no-repeat, linear-gradient(#aaa 2px, transparent 2px) center 18px / 2px 5px no-repeat; }
.fbtns { width: 110px; justify-content: space-around; margin-right: 3px; }
.fx { font: italic 700 15px "Liberation Serif", serif; color: #555; }
.fx i { font-style: italic; }
.fx .x { font-size: 12px; padding-top: 4px; }
.finput { flex: 1; padding: 0 4px 0 11px; }
.finput input { flex: 1; min-width: 0; }

/* worksheet */
.app > .sheet { flex: 1 1 0; min-height: 0; margin-top: 10px; display: flex; border-bottom: 1px solid #999; }
.viewport { position: relative; flex: 1; min-width: 0; overflow: hidden; border-right: 1px solid #999; }
.grid { width: 1900px; table-layout: fixed; border-collapse: separate; border-spacing: 0; background: #fff; color: #222; font-size: 14px; }
.c-head { width: 26px; }
.c-std { width: 91px; }
.c-p { width: 145px; }
.grid th, .grid td { padding: 0; text-align: center; white-space: nowrap; font-weight: 400; }
.grid thead th { height: 17px; line-height: 15px; font-size: 13px; background: #e6e6e6; border-right: 1px solid #ababab; border-bottom: 1px solid #999; }
.grid thead .psel { background: #d2d2d2; color: #217346; border-bottom: 2px solid #217346; }
.corner svg { margin: 3px 0 0 13px; }
.grid tbody th { height: 29px; vertical-align: bottom; line-height: 14px; font-size: 13px; background: #e6e6e6; border-right: 1px solid #999; border-bottom: 1px solid #ababab; }
.grid td { height: 29px; line-height: 20px; border-right: 1px solid #d4d4d4; border-bottom: 1px solid #d4d4d4; }
.grid .picked th { background: #d2d2d2; color: #217346; border-right: 2px solid #217346; }
.picked td:nth-child(2), .picked td:nth-child(4), .picked td:nth-child(7), .picked td:nth-child(11), .picked td:nth-child(n+13):nth-child(-n+17), .picked td:nth-child(21) { font-size: 13px; }
.grid .picked td:nth-child(17) { background: #c6c6c6; border-bottom-color: #a6a6a6; border-right: 2px solid #217346; box-shadow: inset 2px 0 #217346; }
.grid .picked .first td:nth-child(17) { background: #fff; box-shadow: inset 2px 2px #217346; }
.grid td:nth-child(n+20) { color: #000; }
.filters td { position: relative; }
.filters button { position: absolute; right: 0; bottom: 1px; width: 17px; height: 17px; background: linear-gradient(#fff, #e8edf4); border: 1px solid #a0a6b0; }
.filters button::after { content: ""; width: 7px; height: 4px; background: #555; clip-path: polygon(0 0, 100% 0, 50% 100%); }
.grid .tight { padding-right: 17px; }
.grid .strong { font-weight: 700; }
.flag { background: linear-gradient(135deg, #107c10 4px, transparent 4px) left top / 7px 7px no-repeat; }
.cursor { position: absolute; left: 1512px; top: 261px; }

.vscroll { width: 20px; display: flex; flex-direction: column; padding: 2px 1px 0 4px; }
.vscroll button { height: 15px; flex: none; background: #fff; border: 1px solid #ababab; }
.vscroll .thumb { flex: 232; background: #fff; border: 1px solid #ababab; }
.vscroll .rest { flex: 483; background: #dadada; }

/* quick analysis */
.quick { position: absolute; left: 1327px; top: 547px; width: 448px; height: 170px; background: #fff; border: 1px solid #217346; padding: 12px 11px; }
.qtabs { display: flex; }
.qtabs button { height: 20px; padding: 0 12px; border-right: 1px solid #ddd; }
.qtabs button:first-child { padding: 0 11px 0 0; }
.qtabs button:last-child { border: 0; }
.act { color: #217346; font-weight: 700; }
.qitems { display: flex; padding: 24px 0 0 1px; }
.qitems button { flex-direction: column; width: 66px; gap: 4px; color: #c4c4c4; justify-content: flex-start; }
.qitems svg { height: 30px; }
.quick p { margin: 37px 0 0; color: #d0d0d0; }
.tail { position: absolute; left: 212px; top: 168px; }
.ime { position: absolute; left: 1186px; top: 708px; width: 62px; height: 27px; border: 1px solid #aaa; border-radius: 5px; background: #fff; box-shadow: 1px 2px 3px #888; display: flex; align-items: center; justify-content: center; gap: 4px; font-size: 13px; color: #333; }

/* sheet tabs */
.sheetbar { display: flex; height: 28px; padding-bottom: 3px; border-bottom: 1px solid #c0c0c0; font-size: 13px; }
.sheetbar > button { padding: 0 11px 2px; border-right: 1px solid #ababab; }
.sheetbar > .mid { padding: 0 12px 2px; }
.sheetbar > .loose { padding: 0 13px 2px; }
.snav { width: 101px; display: flex; align-items: center; gap: 24px; padding-left: 28px; border-right: 1px solid #ababab; }
.tri { width: 4px; height: 8px; background: #bbb; flex: none; }
.tri.l { clip-path: polygon(100% 0, 100% 100%, 0 50%); }
.tri.r { clip-path: polygon(0 0, 100% 50%, 0 100%); }
.tri.dark { background: #555; }
.sheetbar > .cur { padding: 0 12px; background: #fff; color: #217346; border-bottom: 2px solid #217346; }
.sheetbar > .blue, .sheetbar > .orange { padding: 0 1px; color: #000; font-weight: 500; }
.sheetbar span { padding: 1px 11px 2px; line-height: 20px; }
.blue span { background: #bdd7ee; }
.orange span { background: #f4b084; }
.sheetbar > .add { padding-left: 31px; border: 0; }
.sheetbar .grip { margin-left: auto; }
.hscroll { display: flex; width: 576px; height: 15px; margin: 6px 19px 0 0; }
.hscroll button { width: 15px; background: #fff; border: 1px solid #ababab; }
.hscroll .thumb { flex: 384; background: #fff; border: 1px solid #ababab; }
.hscroll .rest { flex: 162; background: #dadada; }

/* status bar */
.status { height: 14px; overflow: hidden; display: flex; align-items: flex-start; padding: 0 24px 0 7px; background: #f0f0f0; line-height: 17px; }
.status > span { margin-right: 18px; }
.status > svg { margin-top: 3px; }
.stats { margin: 0 18px 0 auto; display: flex; gap: 19px; }
.views { display: flex; }
.views button { width: 38px; height: 22px; padding-bottom: 2px; }
.views .on { background: #c6c6c6; }
.zoom { display: flex; gap: 1px; height: 18px; align-items: center; }
.zoom button { width: 12px; }
.zoom span { margin-left: 12px; }
.zoom input { appearance: none; width: 101px; height: 13px; background: linear-gradient(#aaa, #aaa) center / 100% 1px no-repeat; }
.zoom input::-webkit-slider-thumb { appearance: none; width: 5px; height: 11px; background: #555; }

.brand { position: absolute; right: 10px; bottom: 8px; display: flex; opacity: .85; pointer-events: none; }
.brand div { display: flex; flex-direction: column; }
.brand b { color: #4a90cc; font-size: 21px; line-height: 24px; }
.brand strong { color: #52b55a; font: 700 16px/18px "Open Sans", sans-serif; }
```
